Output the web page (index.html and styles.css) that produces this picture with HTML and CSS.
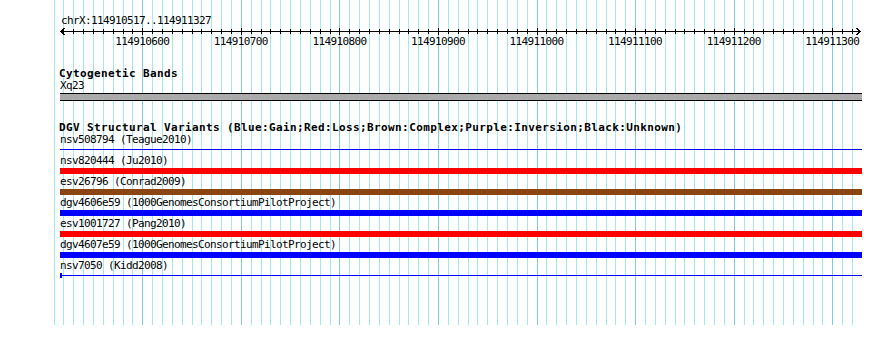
FILE: index.html
```html
<!DOCTYPE html>
<html lang="en">
<head>
    <meta charset="UTF-8">
    <title>chrX:114910517..114911327</title>
    <link rel="stylesheet" href="styles.css">
</head>
<body>
    <div class="canvas">
        <!-- grid lines every 10 bp, darker every 100 bp -->
        <svg class="grid" width="890" height="345">
            <path class="grid-minor" d="M54.5 0V325M63.5 0V325M73.5 0V325M83.5 0V325M93.5 0V325M103.5 0V325M113.5 0V325M123.5 0V325M132.5 0V325M152.5 0V325M162.5 0V325M172.5 0V325M182.5 0V325M192.5 0V325M201.5 0V325M211.5 0V325M221.5 0V325M231.5 0V325M251.5 0V325M261.5 0V325M270.5 0V325M280.5 0V325M290.5 0V325M300.5 0V325M310.5 0V325M320.5 0V325M330.5 0V325M349.5 0V325M359.5 0V325M369.5 0V325M379.5 0V325M389.5 0V325M399.5 0V325M408.5 0V325M418.5 0V325M428.5 0V325M448.5 0V325M458.5 0V325M468.5 0V325M477.5 0V325M487.5 0V325M497.5 0V325M507.5 0V325M517.5 0V325M527.5 0V325M546.5 0V325M556.5 0V325M566.5 0V325M576.5 0V325M586.5 0V325M596.5 0V325M606.5 0V325M615.5 0V325M625.5 0V325M645.5 0V325M655.5 0V325M665.5 0V325M675.5 0V325M684.5 0V325M694.5 0V325M704.5 0V325M714.5 0V325M724.5 0V325M744.5 0V325M753.5 0V325M763.5 0V325M773.5 0V325M783.5 0V325M793.5 0V325M803.5 0V325M813.5 0V325M822.5 0V325M842.5 0V325M852.5 0V325"/>
            <path class="grid-major" d="M142.5 0V325M241.5 0V325M339.5 0V325M438.5 0V325M537.5 0V325M635.5 0V325M734.5 0V325M832.5 0V325"/>
        </svg>

        <div class="panel">
            <div class="ruler">
                <div class="ruler-label">chrX:114910517..114911327</div>
                <svg class="ruler-axis" width="890" height="8">
                    <path d="M60 4.5H860M64.5 1L61 4.5L64.5 8M856.5 1L860 4.5L856.5 8"/>
                    <path d="M63.5 2V7M73.5 2V7M83.5 2V7M93.5 2V7M103.5 2V7M113.5 2V7M123.5 2V7M132.5 2V7M152.5 2V7M162.5 2V7M172.5 2V7M182.5 2V7M192.5 2V7M201.5 2V7M211.5 2V7M221.5 2V7M231.5 2V7M251.5 2V7M261.5 2V7M270.5 2V7M280.5 2V7M290.5 2V7M300.5 2V7M310.5 2V7M320.5 2V7M330.5 2V7M349.5 2V7M359.5 2V7M369.5 2V7M379.5 2V7M389.5 2V7M399.5 2V7M408.5 2V7M418.5 2V7M428.5 2V7M448.5 2V7M458.5 2V7M468.5 2V7M477.5 2V7M487.5 2V7M497.5 2V7M507.5 2V7M517.5 2V7M527.5 2V7M546.5 2V7M556.5 2V7M566.5 2V7M576.5 2V7M586.5 2V7M596.5 2V7M606.5 2V7M615.5 2V7M625.5 2V7M645.5 2V7M655.5 2V7M665.5 2V7M675.5 2V7M684.5 2V7M694.5 2V7M704.5 2V7M714.5 2V7M724.5 2V7M744.5 2V7M753.5 2V7M763.5 2V7M773.5 2V7M783.5 2V7M793.5 2V7M803.5 2V7M813.5 2V7M822.5 2V7M842.5 2V7M852.5 2V7"/>
                    <path d="M142.5 1V8M241.5 1V8M339.5 1V8M438.5 1V8M537.5 1V8M635.5 1V8M734.5 1V8M832.5 1V8"/>
                </svg>
                <div class="ticks">
                    <span>114910600</span>
                    <span>114910700</span>
                    <span>114910800</span>
                    <span>114910900</span>
                    <span>114911000</span>
                    <span>114911100</span>
                    <span>114911200</span>
                    <span>114911300</span>
                </div>
            </div>

            <div class="track track-bands">
                <div class="track-title">Cytogenetic Bands</div>
                <div class="feature-label">Xq23</div>
                <div class="band"></div>
            </div>

            <div class="track track-dgv">
                <div class="track-title">DGV Structural Variants (Blue:Gain;Red:Loss;Brown:Complex;Purple:Inversion;Black:Unknown)</div>

                <div class="feature">
                    <div class="feature-label">nsv508794 (Teague2010)</div>
                    <div class="glyph"><div class="span-line blue"></div></div>
                </div>
                <div class="feature">
                    <div class="feature-label">nsv820444 (Ju2010)</div>
                    <div class="glyph"><div class="bar red"></div></div>
                </div>
                <div class="feature">
                    <div class="feature-label">esv26796 (Conrad2009)</div>
                    <div class="glyph"><div class="bar brown"></div></div>
                </div>
                <div class="feature">
                    <div class="feature-label">dgv4606e59 (1000GenomesConsortiumPilotProject)</div>
                    <div class="glyph"><div class="bar blue"></div></div>
                </div>
                <div class="feature">
                    <div class="feature-label">esv1001727 (Pang2010)</div>
                    <div class="glyph"><div class="bar red"></div></div>
                </div>
                <div class="feature">
                    <div class="feature-label">dgv4607e59 (1000GenomesConsortiumPilotProject)</div>
                    <div class="glyph"><div class="bar blue"></div></div>
                </div>
                <div class="feature">
                    <div class="feature-label">nsv7050 (Kidd2008)</div>
                    <div class="glyph">
                        <div class="span-line with-start">
                            <div class="start-mark"></div>
                            <div class="span-rule"></div>
                        </div>
                    </div>
                </div>
            </div>
        </div>
    </div>
</body>
</html>
```

FILE: styles.css
```css
body {
    margin: 0;
    background-color: #fff;
}

.canvas {
    position: relative;
    width: 890px;
    height: 345px;
    overflow: hidden;
    background-color: #fff;
    color: #000;
    font-family: "DejaVu Sans Mono", "Liberation Mono", monospace;
    font-size: 11px;
    letter-spacing: -0.62px;
}

/* background grid */
.grid {
    position: absolute;
    top: 0;
    left: 0;
    shape-rendering: crispEdges;
}

.grid-minor {
    stroke: #a4e7ee;
    stroke-width: 1;
}

.grid-major {
    stroke: #7ec8e8;
    stroke-width: 1;
}

.panel {
    position: relative;
}

/* ruler */
.ruler {
    padding-top: 14px;
}

.ruler-label {
    padding-left: 61px;
    line-height: 13px;
    height: 13px;
}

.ruler-axis {
    display: block;
    shape-rendering: crispEdges;
}

.ruler-axis path {
    stroke: #000;
    stroke-width: 1;
    fill: none;
}

.ticks {
    display: flex;
    padding-left: 93px;
    height: 13px;
    line-height: 13px;
}

.ticks span {
    flex: 0 0 98.57px;
    text-align: center;
}

/* tracks */
.track-bands {
    margin-top: 20px;
}

.track-dgv {
    margin-top: 21px;
}

.track-title {
    padding-left: 59px;
    font-weight: bold;
    letter-spacing: 0.38px;
    line-height: 12px;
    height: 12px;
    white-space: nowrap;
}

.feature-label {
    padding-left: 60px;
    line-height: 12px;
    height: 12px;
    white-space: nowrap;
}

.band {
    margin: 1px 0 0 60px;
    width: 802px;
    height: 6px;
    background-color: #aaaaaa;
    border-top: 1px solid #000;
    border-bottom: 1px solid #000;
}

.glyph {
    display: flow-root;
    height: 9px;
    padding-left: 60px;
}

.bar {
    margin-top: 1px;
    width: 802px;
    height: 6px;
}

.span-line {
    margin-top: 3px;
    width: 802px;
    height: 1px;
}

.span-line.with-start {
    display: flex;
    align-items: center;
    margin-top: 1px;
    height: 5px;
}

.start-mark {
    width: 2px;
    height: 5px;
    background-color: #0000ff;
}

.span-rule {
    flex: 1;
    height: 1px;
    background-color: #0000ff;
}

.blue {
    background-color: #0000ff;
}

.red {
    background-color: #ff0000;
}

.brown {
    background-color: #8b4513;
}
```
